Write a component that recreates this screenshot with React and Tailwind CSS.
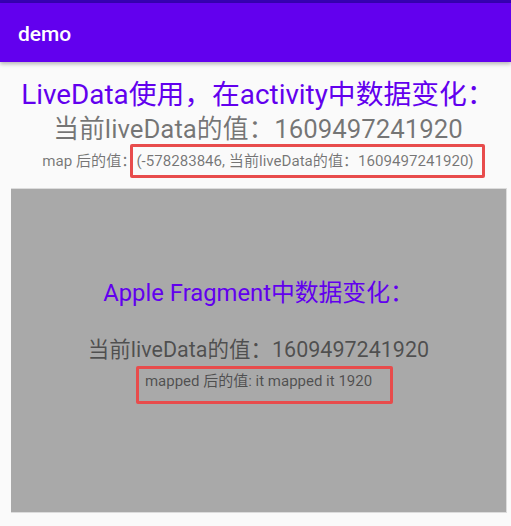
export default function App() {
  const font = { fontFamily: 'Roboto, "Noto Sans CJK SC", sans-serif' };
  return (
    <div
      className="relative w-[511px] h-[526px] overflow-hidden bg-[#fafafa] font-['Roboto','Noto_Sans_CJK_SC',sans-serif]"
      style={font}
    >
      <div className="h-[3px] bg-[#3700b3]" />
      <div className="relative z-10 flex h-[59px] items-center bg-[#6200ee] pl-[18px] pt-[4px] shadow-[0_2px_4px_rgba(0,0,0,0.28)]">
        <span className="text-[21px] font-medium leading-none text-white">demo</span>
      </div>

      <div className="flex flex-col items-center pl-[5px]">
        <div className="mt-[15px] whitespace-nowrap text-[27.8px] leading-[36px] text-[#6200ee]">
          LiveData使用，在activity中数据变化：
        </div>
        <div className="whitespace-nowrap text-[25.8px] leading-[32px] text-black/[0.54]">
          当前liveData的值：1609497241920
        </div>
        <div className="mt-[6px] whitespace-nowrap text-[15.1px] leading-[20px] text-black/[0.54]">
          map 后的值：(-578283846, 当前liveData的值：1609497241920)
        </div>
      </div>

      <div className="ml-[11px] mt-[17px] flex h-[325px] w-[496px] flex-col items-center border-t border-r border-b border-[#dcdcdc] bg-[#a9a9a9]">
        <div className="mt-[89px] whitespace-nowrap text-[23.8px] leading-[30px] text-[#6200ee]">
          Apple Fragment中数据变化：
        </div>
        <div className="mt-[28px] whitespace-nowrap text-[21.5px] leading-[28px] text-black/[0.54]">
          当前liveData的值：1609497241920
        </div>
        <div className="mt-[7px] whitespace-nowrap text-[15px] leading-[20px] text-black/[0.54]">
          mapped 后的值: it mapped it 1920
        </div>
      </div>

      <div className="pointer-events-none absolute left-[130px] top-[144px] h-[34px] w-[355px] rounded-[2px] border-[3px] border-[#e84c4c]" />
      <div className="pointer-events-none absolute left-[136px] top-[366px] h-[38px] w-[257px] rounded-[2px] border-[3px] border-[#e84c4c]" />
    </div>
  );
}
